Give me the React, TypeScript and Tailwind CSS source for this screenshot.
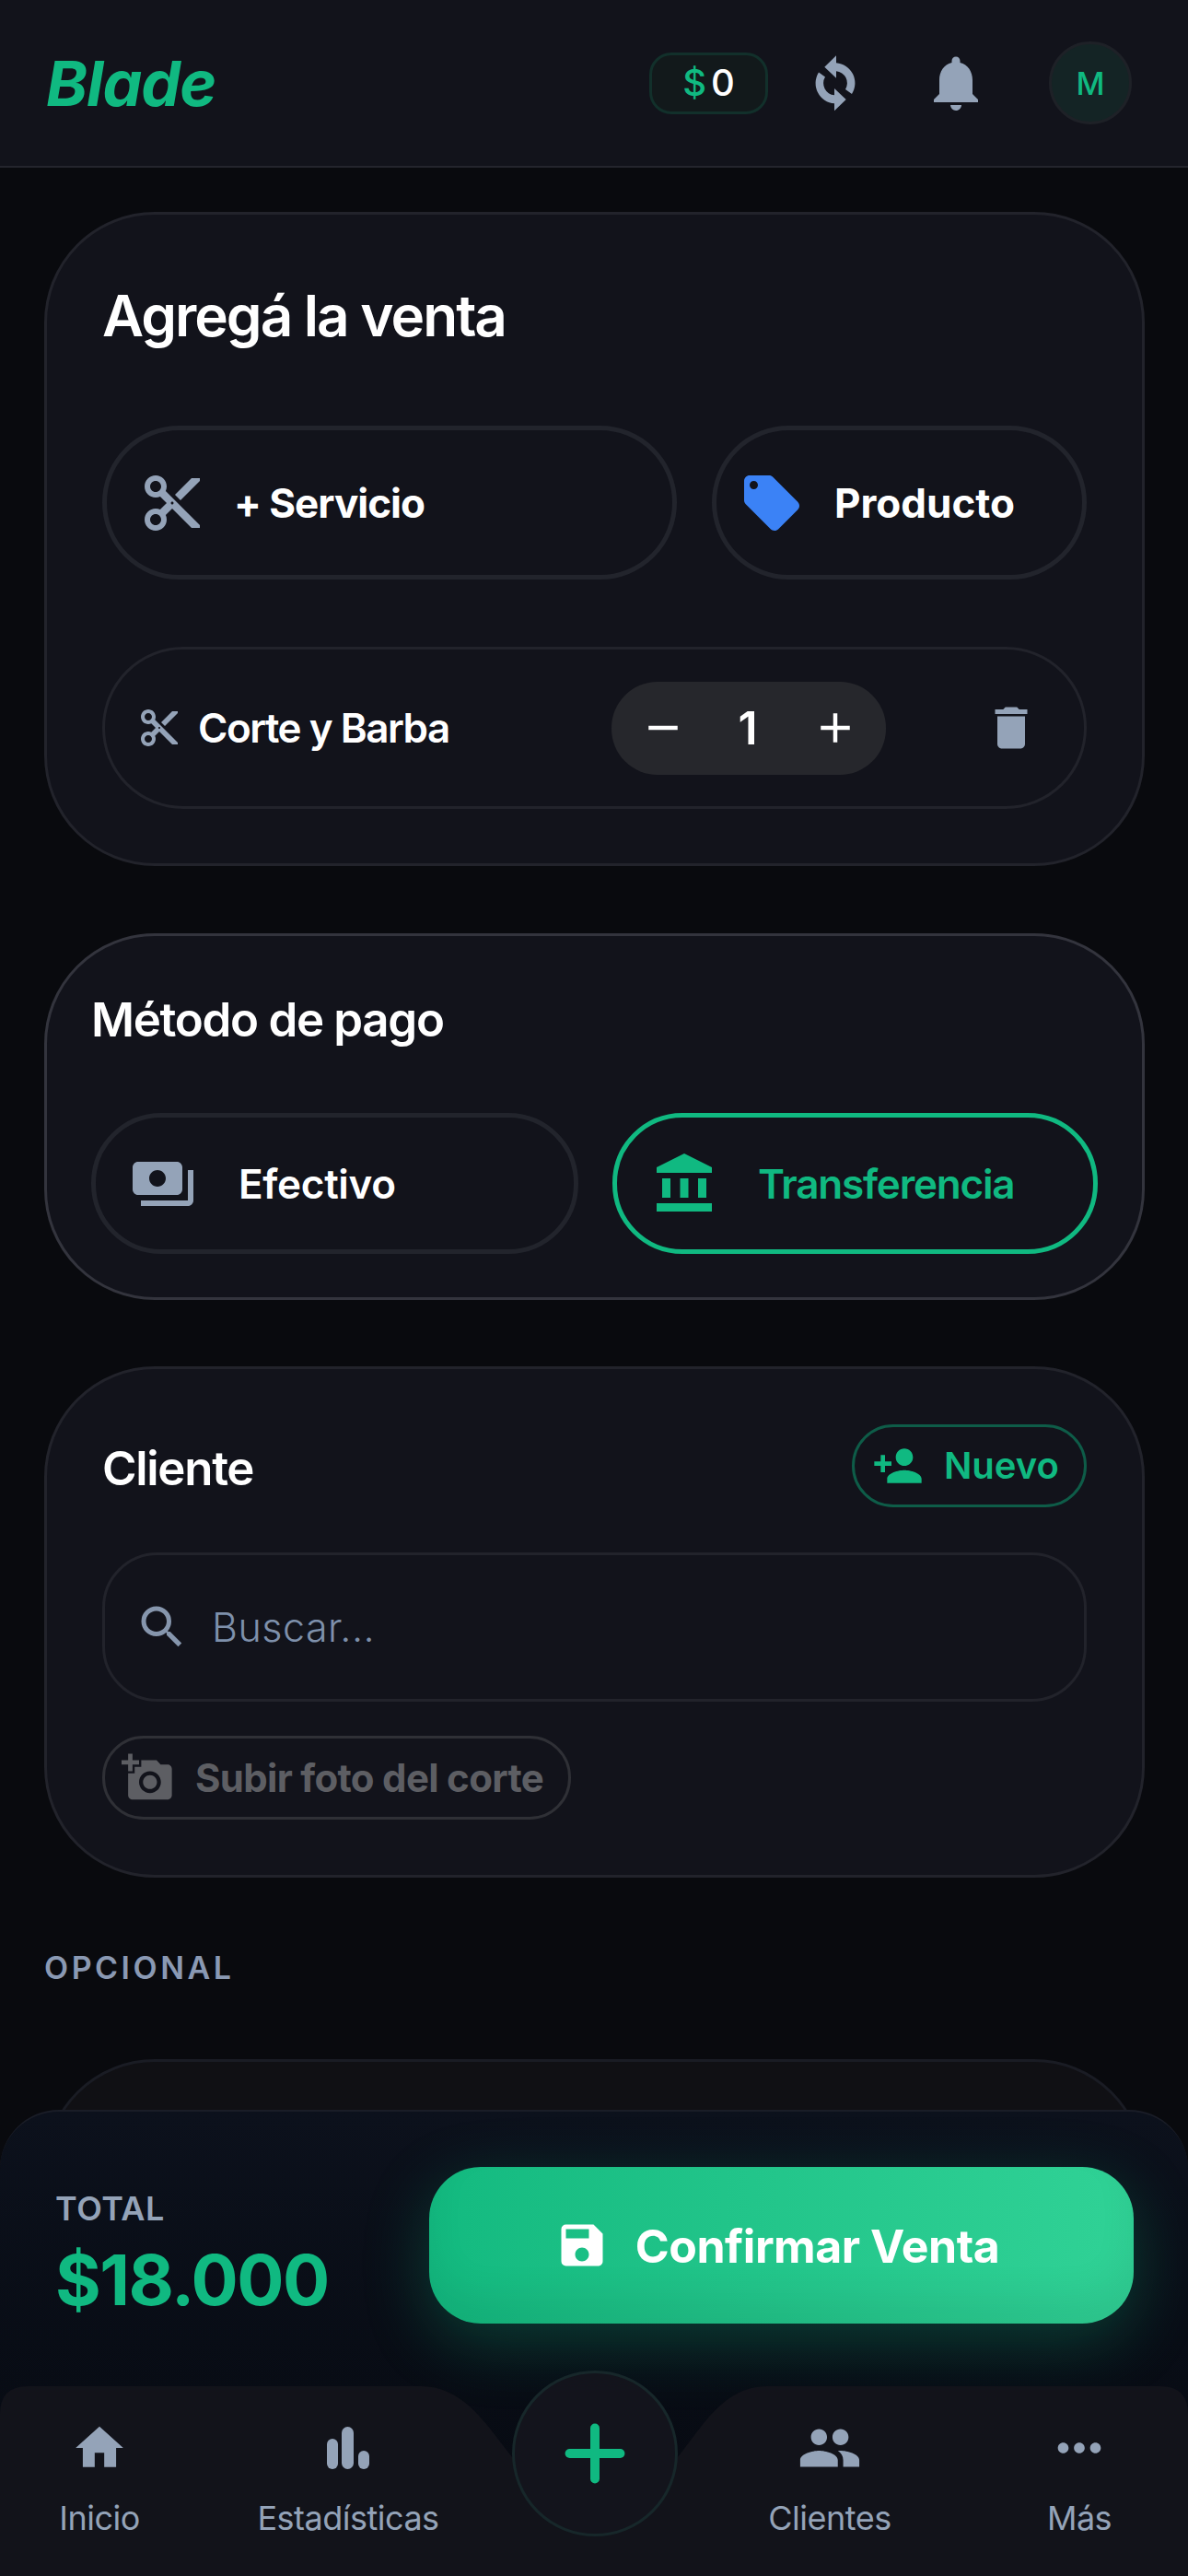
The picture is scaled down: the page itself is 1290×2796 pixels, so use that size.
import React from 'react';
import {
  MdAccountBalance,
  MdAdd,
  MdAddAPhoto,
  MdContentCut,
  MdDelete,
  MdHome,
  MdLocalOffer,
  MdMoreHoriz,
  MdNotifications,
  MdPayments,
  MdPeople,
  MdPersonAdd,
  MdRemove,
  MdSave,
  MdSearch,
} from 'react-icons/md';
import { Plus } from 'lucide-react';

const SyncIcon = () => (
  <svg width="60" height="76" viewBox="0 0 60 76" fill="#94a3b8" className="ml-[43px]">
    <path d="M31 8.3L18.3 20.7L31 32.7V25.3A13 13 0 0 1 41 45L48 50A22 22 0 0 0 31 16.3Z" />
    <path d="M29 68.3L41.7 55.9L29 43.9V51.3A13 13 0 0 1 19 31.6L12 26.6A22 22 0 0 0 29 60.3Z" />
  </svg>
);

const StatsIcon = () => (
  <svg width="46" height="46" viewBox="0 0 46 46" fill="#94a3b8">
    <rect x="0" y="13" width="12" height="33" rx="6" />
    <rect x="16" y="0" width="13" height="46" rx="6.5" />
    <rect x="34" y="26" width="12" height="20" rx="6" />
  </svg>
);

const NavItem: React.FC<{ label: string; children: React.ReactNode }> = ({ label, children }) => (
  <div className="flex flex-col items-center">
    <div className="flex h-[72px] items-center justify-center">{children}</div>
    <span className="mt-[16px] text-[36px] leading-[48px] font-normal tracking-[-0.5px] text-[#94a3b8]">{label}</span>
  </div>
);

export default function App() {
  return (
    <div className="relative flex h-[2796px] w-[1290px] flex-col overflow-hidden bg-[#090a0e] font-['Inter',sans-serif] text-white">
      <header className="flex h-[182px] shrink-0 items-center border-b-2 border-[#24252d] bg-[#12131b] pr-[61px] pl-[50px]">
        <span className="text-[68px] leading-none font-bold tracking-[-1px] text-[#10b981] italic">Blade</span>
        <div className="ml-auto flex items-center">
          <div className="flex h-[67px] w-[129px] items-center justify-center gap-[5px] rounded-[24px] border-[3px] border-[#12302b] bg-[#12191b] text-[40px] font-medium">
            <span className="text-[#10b981]">$</span>
            <span>0</span>
          </div>
          <SyncIcon />
          <MdNotifications size={72} color="#94a3b8" className="ml-[65px]" />
          <div className="ml-[65px] flex h-[90px] w-[90px] items-center justify-center rounded-full border-[3px] border-[#1e2127] bg-[#142425] text-[34px] font-medium text-[#10b981]">
            M
          </div>
        </div>
      </header>

      <main className="flex flex-col pt-[48px] pr-[47px] pl-[48px]">
        <section className="h-[710px] rounded-[120px] border-[3px] border-[#22232b] bg-[#12131b] px-[60px] pt-[72px]">
          <h2 className="text-[62px] leading-[76px] font-semibold tracking-[-2px]">Agregá la venta</h2>
          <div className="mt-[81px] flex gap-[38px]">
            <button className="flex h-[167px] w-[624px] items-center gap-[31px] rounded-[84px] border-[5px] border-[#22242c] pl-[35px]">
              <MdContentCut size={72} color="#94a3b8" />
              <span className="text-[44px] font-bold tracking-[-1px]">+ Servicio</span>
            </button>
            <button className="flex h-[167px] w-[407px] items-center gap-[32px] rounded-[84px] border-[5px] border-[#22242c] pl-[24px]">
              <MdLocalOffer size={72} color="#3b82f6" />
              <span className="text-[44px] font-bold tracking-[0px]">Producto</span>
            </button>
          </div>
          <div className="mt-[73px] flex h-[176px] items-center rounded-[88px] border-[3px] border-[#22232b] pr-[49px] pl-[35px]">
            <MdContentCut size={48} color="#94a3b8" />
            <span className="ml-[18px] text-[44px] font-semibold tracking-[-1.5px]">Corte y Barba</span>
            <div className="ml-auto flex h-[101px] w-[298px] items-center rounded-[50px] bg-[#26272c] pl-[29px]">
              <MdRemove size={54} color="#fff" />
              <span className="ml-[40px] w-[50px] text-center text-[50px] font-semibold">1</span>
              <MdAdd size={54} color="#fff" className="ml-[43px]" />
            </div>
            <MdDelete size={60} color="#94a3b8" className="ml-[106px]" />
          </div>
        </section>

        <section className="mt-[73px] h-[398px] rounded-[120px] border-[3px] border-[#33343d] bg-[#12131b] px-[48px] pt-[59px]">
          <h2 className="text-[51px] leading-[64px] font-semibold tracking-[-1.3px]">Método de pago</h2>
          <div className="mt-[69px] flex gap-[37px]">
            <button className="flex h-[153px] w-[529px] items-center gap-[46px] rounded-[76px] border-[5px] border-[#22242c] pl-[37px]">
              <MdPayments size={72} color="#94a3b8" />
              <span className="text-[44px] font-semibold tracking-[-0.3px]">Efectivo</span>
            </button>
            <button className="flex h-[153px] w-[527px] items-center gap-[44px] rounded-[76px] border-[5px] border-[#10b981] pl-[37px]">
              <MdAccountBalance size={72} color="#10b981" />
              <span className="text-[44px] font-semibold tracking-[-1.2px] text-[#10b981]">Transferencia</span>
            </button>
          </div>
        </section>

        <section className="mt-[72px] h-[555px] rounded-[120px] border-[3px] border-[#22232b] bg-[#12131b] px-[60px] pt-[60px]">
          <div className="flex items-center justify-between">
            <h2 className="mt-[6px] text-[51px] leading-[64px] font-semibold tracking-[-1.3px]">Cliente</h2>
            <button className="flex h-[90px] w-[255px] items-center gap-[22px] rounded-[45px] border-[3px] border-[#0e5c48] pl-[19px] text-[#10b981]">
              <MdPersonAdd size={56} />
              <span className="text-[40px] font-semibold">Nuevo</span>
            </button>
          </div>
          <div className="mt-[49px] flex h-[162px] items-center gap-[24px] rounded-[60px] border-[3px] border-[#22232b] pl-[32px]">
            <MdSearch size={60} color="#8696ad" />
            <input
              placeholder="Buscar..."
              className="w-[800px] bg-transparent text-[43px] font-light tracking-[0.5px] outline-none placeholder:text-[#7e90ab]"
            />
          </div>
          <button className="mt-[37px] flex h-[91px] w-[509px] items-center gap-[23px] rounded-[45px] border-[3px] border-[#2f3036] pl-[18px] text-[#5d5e63]">
            <MdAddAPhoto size={57} />
            <span className="text-[42px] font-bold tracking-[-0.7px]">Subir foto del corte</span>
          </button>
        </section>

        <p className="mt-[76px] text-[34px] leading-[44px] font-semibold tracking-[3.5px] text-[#8a99b3]">OPCIONAL</p>
        <section className="mt-[77px] h-[320px] rounded-[120px] border-[3px] border-[#1a1c24] bg-[#101014]" />
      </main>

      <div className="absolute inset-x-0 bottom-0 h-[506px] rounded-t-[64px] border-t-2 border-[#1a1d27] bg-gradient-to-b from-[#0c111c] to-[#060910]">
        <div className="flex items-start justify-between pt-[60px] pr-[59px] pl-[60px]">
          <div className="pt-[21px]">
            <p className="text-[36px] leading-[48px] font-semibold tracking-[0.5px] text-[#94a3b8]">TOTAL</p>
            <p className="mt-[7px] text-[76px] leading-[92px] font-bold tracking-[-1.5px] text-[#10b981]">$18.000</p>
          </div>
          <button className="flex h-[170px] w-[765px] items-center justify-center gap-[28px] rounded-[56px] bg-gradient-to-r from-[#13ba80] to-[#30d296] pr-[10px] shadow-[0_20px_70px_rgba(16,185,129,0.28),inset_0_-30px_40px_rgba(0,0,0,0.07)]">
            <MdSave size={60} color="#fff" />
            <span className="pt-[3px] text-[50px] font-bold tracking-[-0.5px]">Confirmar Venta</span>
          </button>
        </div>

        <nav className="absolute inset-x-0 bottom-0 h-[206px]">
          <svg width="1290" height="206" viewBox="0 0 1290 206" fill="#12131a" className="absolute inset-0">
            <path d="M0 30Q0 0 30 0H457C505 0 530 45 557 78H735C762 45 785 0 833 0H1260Q1290 0 1290 30V206H0Z" />
          </svg>
          <div className="relative grid grid-cols-[216px_324px_212px_298px_244px] pt-[31px]">
            <NavItem label="Inicio">
              <MdHome size={62} color="#94a3b8" />
            </NavItem>
            <NavItem label="Estadísticas">
              <StatsIcon />
            </NavItem>
            <div className="flex justify-center">
              <div className="-mt-[48px] flex h-[180px] w-[180px] items-center justify-center rounded-full border-[3px] border-[#17272a] bg-[#13141c]">
                <Plus size={94} color="#10b981" strokeWidth={2.55} />
              </div>
            </div>
            <NavItem label="Clientes">
              <MdPeople size={70} color="#94a3b8" />
            </NavItem>
            <NavItem label="Más">
              <MdMoreHoriz size={70} color="#94a3b8" />
            </NavItem>
          </div>
        </nav>
      </div>
    </div>
  );
}
